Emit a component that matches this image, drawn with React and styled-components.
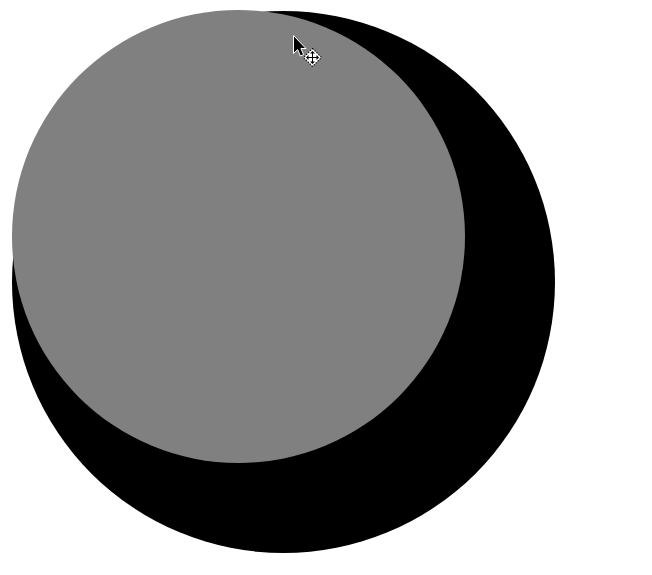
import React from 'react';
import styled, { createGlobalStyle } from 'styled-components';

const Global = createGlobalStyle`
  html, body {
    margin: 0;
    background: #fff;
  }
`;

const Stage = styled.div`
  padding: 11px 0 0 12px;
`;

const BackDisc = styled.div`
  position: relative;
  width: 543px;
  height: 542px;
  border-radius: 50%;
  background: #000;
`;

const FrontDisc = styled.div`
  position: absolute;
  left: 0;
  top: -1px;
  width: 453px;
  height: 453px;
  border-radius: 50%;
  background: #808080;
`;

const Cursor = styled.svg`
  position: absolute;
  left: 278px;
  top: 22px;
  width: 32px;
  height: 34px;
`;

const MoveCursor = () => (
  <Cursor viewBox="0 0 32 34">
    <path
      d="M3.5 2.5V20.5L7.6 16.6L10.4 23L13.6 21.6L10.9 15.5H16Z"
      fill="#000"
      stroke="#fff"
      strokeWidth="1"
    />
    <path d="M22.5 15.5L31.5 24.5L22.5 33.5L13.5 24.5Z" fill="#fff" />
    <path
      d="M22.5 15.5L31.5 24.5L22.5 33.5L13.5 24.5Z"
      fill="none"
      stroke="#000"
      strokeWidth="1.1"
      strokeDasharray="1.4 1.4"
    />
    <path
      d="M22.5 18L25 20.5H23V24H26.5V22L29 24.5L26.5 27V25H23V28.5H25L22.5 31L20 28.5H22V25H18.5V27L16 24.5L18.5 22V24H22V20.5H20Z"
      fill="#000"
    />
  </Cursor>
);

export default function App() {
  return (
    <>
      <Global />
      <Stage>
        <BackDisc>
          <FrontDisc />
          <MoveCursor />
        </BackDisc>
      </Stage>
    </>
  );
}
